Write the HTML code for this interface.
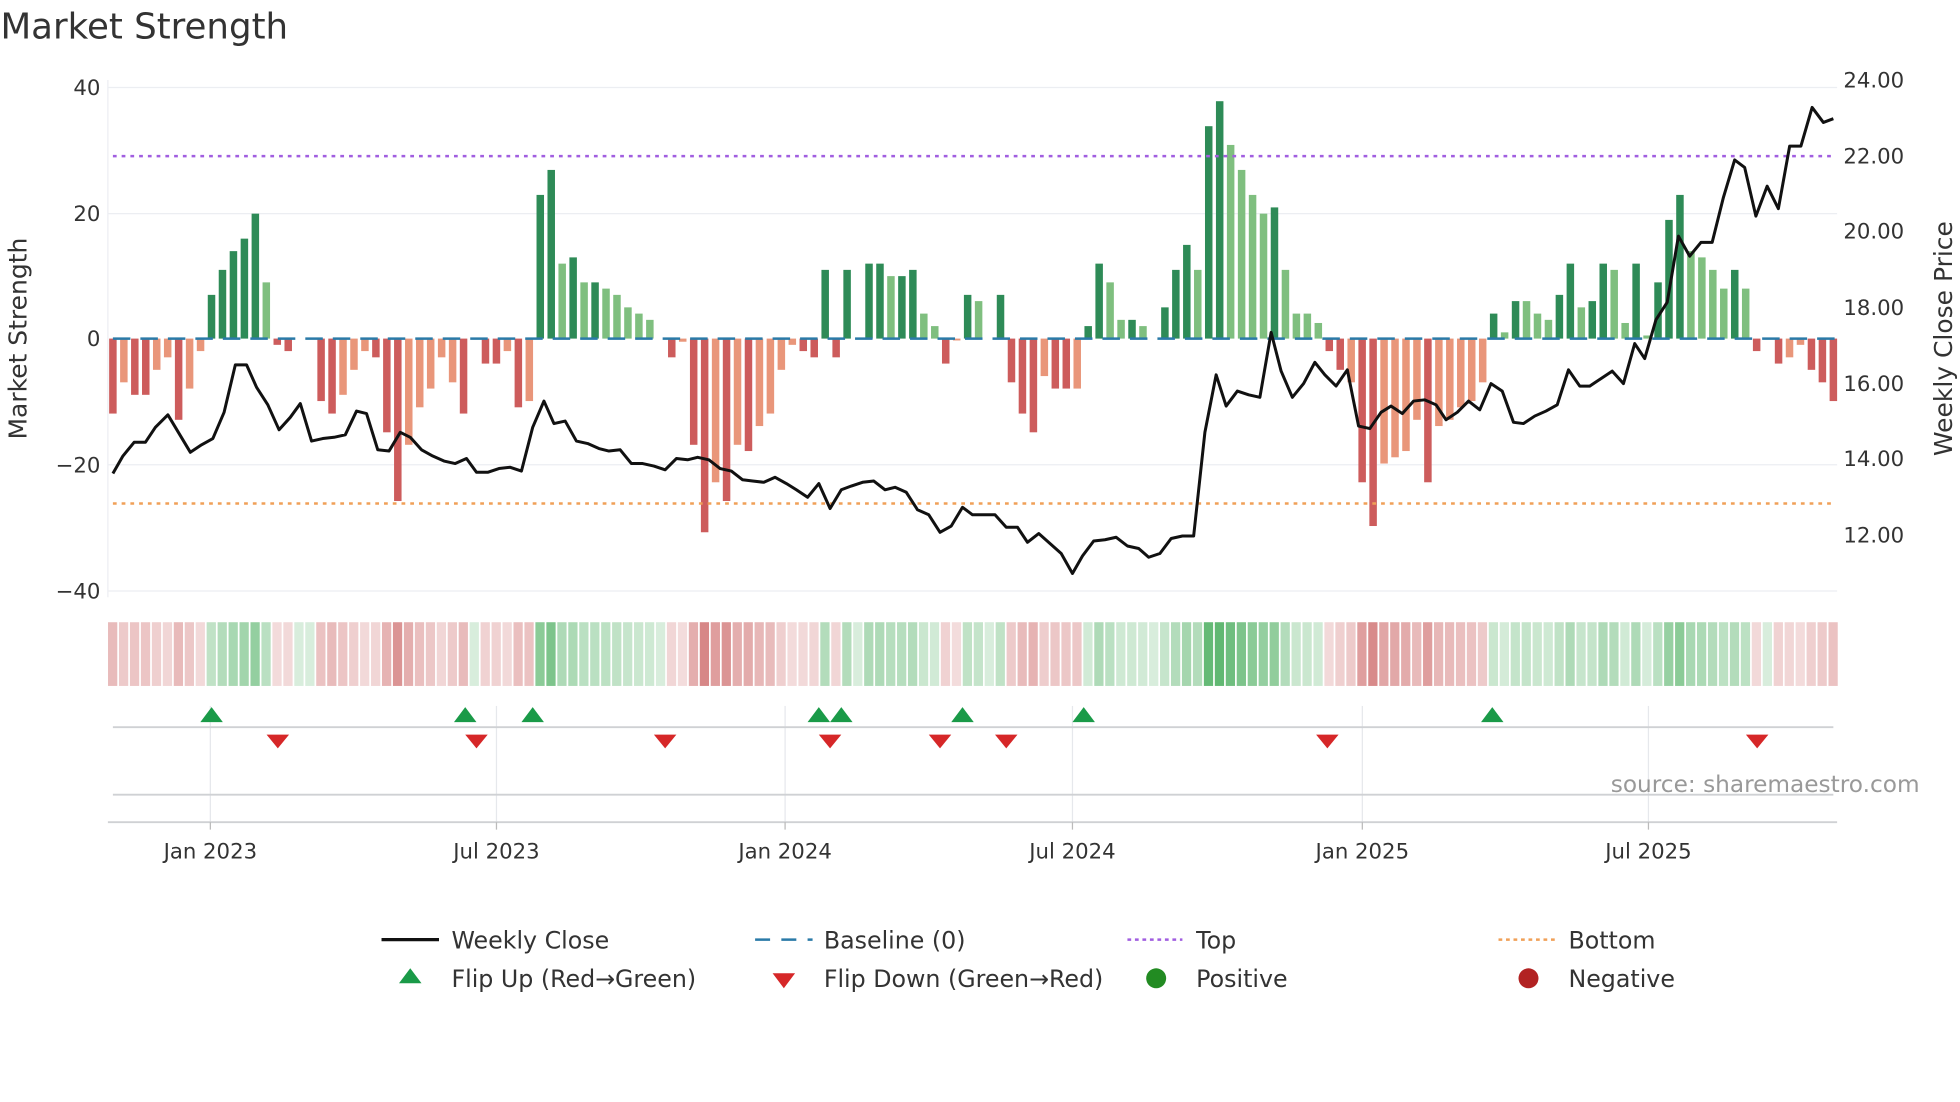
<!DOCTYPE html>
<html><head><meta charset="utf-8"><style>
html,body{margin:0;padding:0;background:#fff;width:1960px;height:1102px;overflow:hidden}
svg{display:block;font-family:"DejaVu Sans","Liberation Sans",sans-serif}
</style></head><body>
<svg id="s" width="1960" height="1102" viewBox="0 0 1568 882" xmlns="http://www.w3.org/2000/svg">
<rect width="1568" height="882" fill="#fff"/>
<text x="0" y="31" font-size="28.5" fill="#333">Market Strength</text>
<g stroke="#eceef2" stroke-width="1">
<line x1="86" y1="70" x2="1470" y2="70"/><line x1="86" y1="171" x2="1470" y2="171"/>
<line x1="86" y1="372" x2="1470" y2="372"/><line x1="86" y1="473" x2="1470" y2="473"/>
<line x1="86" y1="64" x2="86" y2="478"/>
</g>
<g font-size="17" fill="#333" text-anchor="end">
<text x="80" y="76">40</text><text x="80" y="177">20</text><text x="80" y="277">0</text>
<text x="80" y="378">−20</text><text x="80" y="479">−40</text></g>
<g font-size="17" fill="#333">
<text x="1475" y="70">24.00</text><text x="1475" y="131">22.00</text><text x="1475" y="191">20.00</text>
<text x="1475" y="252">18.00</text><text x="1475" y="313">16.00</text><text x="1475" y="373">14.00</text><text x="1475" y="434">12.00</text></g>
<text transform="translate(21,271) rotate(-90)" font-size="20" fill="#333" text-anchor="middle">Market Strength</text>
<text transform="translate(1562,271) rotate(-90)" font-size="20" fill="#333" text-anchor="middle">Weekly Close Price</text>
<g id="bars"></g>
<line x1="90" y1="271" x2="1468" y2="271" stroke="#2a7aa8" stroke-width="2" stroke-dasharray="14,8"/>
<line x1="90" y1="125" x2="1468" y2="125" stroke="#a15ee0" stroke-width="2" stroke-dasharray="3,4"/>
<line x1="90" y1="403" x2="1468" y2="403" stroke="#f0a058" stroke-width="2" stroke-dasharray="3,4"/>
<polyline id="price" fill="none" stroke="#111" stroke-width="2.4" stroke-linejoin="round"/>
<g id="strip"></g>
<g stroke="#e6e8ec" stroke-width="1">
<line x1="168" y1="565" x2="168" y2="658"/><line x1="397" y1="565" x2="397" y2="658"/>
<line x1="628" y1="565" x2="628" y2="658"/><line x1="858" y1="565" x2="858" y2="658"/>
<line x1="1090" y1="565" x2="1090" y2="658"/><line x1="1319" y1="565" x2="1319" y2="658"/></g>
<line x1="90" y1="582" x2="1467" y2="582" stroke="#cfd1d4" stroke-width="1.5"/>
<line x1="90" y1="636" x2="1467" y2="636" stroke="#cfd1d4" stroke-width="1.5"/>
<line x1="86" y1="658" x2="1470" y2="658" stroke="#cfd1d4" stroke-width="1.5"/>
<g stroke="#bbb"><line x1="168" y1="658" x2="168" y2="664"/><line x1="397" y1="658" x2="397" y2="664"/><line x1="628" y1="658" x2="628" y2="664"/><line x1="858" y1="658" x2="858" y2="664"/><line x1="1090" y1="658" x2="1090" y2="664"/><line x1="1319" y1="658" x2="1319" y2="664"/></g>
<g id="marks"></g>
<text x="1536" y="634" font-size="18.6" fill="#999" text-anchor="end">source: sharemaestro.com</text>
<g font-size="17" fill="#333" text-anchor="middle">
<text x="168" y="687">Jan 2023</text><text x="397" y="687">Jul 2023</text><text x="628" y="687">Jan 2024</text>
<text x="858" y="687">Jul 2024</text><text x="1090" y="687">Jan 2025</text><text x="1319" y="687">Jul 2025</text></g>
<g font-size="19" fill="#333">
<line x1="305" y1="752" x2="351" y2="752" stroke="#111" stroke-width="2.6"/><text x="361" y="759">Weekly Close</text>
<line x1="604" y1="752" x2="650" y2="752" stroke="#2a7aa8" stroke-width="2" stroke-dasharray="12,9"/><text x="659" y="759">Baseline (0)</text>
<line x1="902" y1="752" x2="946" y2="752" stroke="#a15ee0" stroke-width="2" stroke-dasharray="3,3"/><text x="957" y="759">Top</text>
<line x1="1199" y1="752" x2="1244" y2="752" stroke="#f0a058" stroke-width="2" stroke-dasharray="3,3"/><text x="1255" y="759">Bottom</text>
<polygon points="328,775 319,787 337,787" fill="#1a9a48"/><text x="361" y="790">Flip Up (Red→Green)</text>
<polygon points="618,779 636,779 627,791" fill="#d62728"/><text x="659" y="790">Flip Down (Green→Red)</text>
<circle cx="925" cy="783" r="8" fill="#228b22"/><text x="957" y="790">Positive</text>
<circle cx="1223" cy="783" r="8" fill="#b22222"/><text x="1255" y="790">Negative</text>
</g>
</svg>
<script>
var NS="http://www.w3.org/2000/svg";
function el(t,a,p){var e=document.createElementNS(NS,t);for(var k in a)e.setAttribute(k,a[k]);document.getElementById(p).appendChild(e);return e;}
var B=[-12,1,-7,0,-9,1,-9,1,-5,0,-3,0,-13,1,-8,0,-2,0,7,1,11,1,14,1,16,1,20,1,9,0,-1,1,-2,1,0,0,0,0,-10,1,-12,1,-9,0,-5,0,-2,0,-3,1,-15,1,-26,1,-17,0,-11,0,-8,0,-3,0,-7,0,-12,1,0,0,-4,1,-4,1,-2,0,-11,1,-10,0,23,1,27,1,12,0,13,1,9,0,9,1,8,0,7,0,5,0,4,0,3,0,0,0,-3,1,-0.5,0,-17,1,-31,1,-23,0,-26,1,-17,0,-18,1,-14,0,-12,0,-5,0,-1,0,-2,1,-3,1,11,1,-3,1,11,1,0,0,12,1,12,1,10,0,10,1,11,1,4,0,2,0,-4,1,-0.3,0,7,1,6,0,0,0,7,1,-7,1,-12,1,-15,1,-6,0,-8,1,-8,1,-8,0,2,1,12,1,9,0,3,0,3,1,2,0,0,0,5,1,11,1,15,1,11,0,34,1,38,1,31,0,27,0,23,0,20,0,21,1,11,0,4,0,4,0,2.5,0,-2,1,-5,1,-7,0,-23,1,-30,1,-20,0,-19,0,-18,0,-13,0,-23,1,-14,0,-13,0,-11,0,-10,0,-7,0,4,1,1,0,6,1,6,0,4,0,3,0,7,1,12,1,5,0,6,1,12,1,11,0,2.5,0,12,1,0.5,0,9,1,19,1,23,1,14,0,13,0,11,0,8,0,11,1,8,0,-2,1,0,0,-4,1,-3,0,-1,0,-5,1,-7,1,-10,1];
var n=B.length/2,step=(1467-90)/(n-1);
for(var i=0;i<n;i++){var v=B[2*i],d=B[2*i+1],x=90+i*step;
 var c=v>=0?(d?"#2e8b57":"#7fbf7f"):(d?"#cd5c5c":"#e9967a");
 var y=v>=0?271-v*5:271,h=Math.abs(v)*5;
 if(h>0)el("rect",{x:x-3,y:y,width:6,height:h,fill:c},"bars");
 el("rect",{x:x-3.9,y:498,width:7.4,height:51,fill:v>=0?"#3aa64f":"#c85a5a","fill-opacity":(0.2+0.6*Math.min(1,Math.abs(v)/35)).toFixed(2)},"strip");}
var P=[90,379,98,365,107,354,116,354,124,342,134,332,143,347,152,362,161,356,170,351,179,330,188,292,197,292,205,310,214,324,223,344,232,334,240,323,249,353,258,351,267,350,276,348,285,329,293,331,302,360,311,361,320,346,328,350,337,360,346,365,355,369,364,371,373,367,381,378,390,378,399,375,408,374,417,377,426,342,435,321,443,339,452,337,461,353,470,355,479,359,487,361,496,360,505,371,514,371,523,373,532,376,541,367,550,368,558,366,567,368,576,375,585,377,594,384,602,385,611,386,620,382,629,387,637,392,646,398,655,387,664,407,673,392,681,389,690,386,699,385,708,392,716,390,725,394,734,408,743,412,752,426,761,421,770,406,778,412,787,412,796,412,805,422,814,422,822,434,831,427,840,435,849,443,858,459,866,445,875,433,884,432,893,430,902,437,911,439,919,446,928,443,937,431,946,429,955,429,964,346,973,300,981,325,990,313,999,316,1008,318,1017,266,1025,297,1034,318,1043,307,1052,290,1060,300,1069,309,1078,296,1087,341,1096,343,1105,330,1113,325,1122,331,1131,321,1140,320,1149,324,1157,336,1166,330,1175,321,1184,328,1193,307,1202,313,1211,338,1219,339,1228,333,1237,329,1246,324,1255,296,1264,309,1272,309,1281,303,1290,297,1299,307,1308,275,1316,287,1325,256,1334,242,1343,189,1352,205,1361,194,1370,194,1379,158,1388,128,1396,134,1405,173,1414,149,1423,167,1432,117,1441,117,1450,86,1459,98,1467,95];
var s="";for(var i=0;i<P.length;i+=2)s+=P[i]+","+P[i+1]+" ";document.getElementById("price").setAttribute("points",s);
[169,372,426,655,673,770,867,1194].forEach(function(x){el("polygon",{points:(x)+",566 "+(x-9)+",578 "+(x+9)+",578",fill:"#1a9a48"},"marks");});
[222,381,532,664,752,805,1062,1406].forEach(function(x){el("polygon",{points:(x-9)+",588 "+(x+9)+",588 "+x+",599",fill:"#d62728"},"marks");});
</script>
</body></html>
